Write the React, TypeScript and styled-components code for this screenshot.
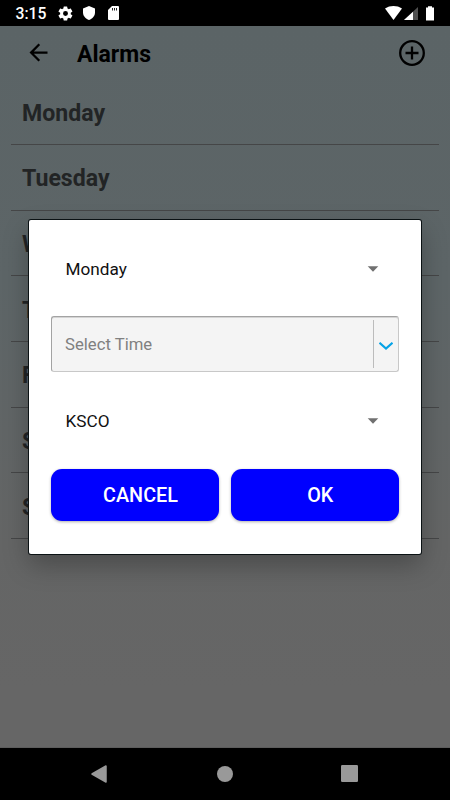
import React from "react";
import styled, { createGlobalStyle } from "styled-components";

const GlobalStyle = createGlobalStyle`
  * { box-sizing: border-box; }
  body { margin: 0; background: #000; font-family: Roboto, sans-serif; }
`;

const Screen = styled.div`
  position: relative;
  width: 450px;
  height: 800px;
  display: flex;
  flex-direction: column;
  overflow: hidden;
`;

const StatusBar = styled.header`
  height: 26px;
  flex: none;
  display: flex;
  align-items: center;
  justify-content: space-between;
  padding: 0 15px;
  background: #000;
  color: #fff;
`;

const StatusGroup = styled.div`
  display: flex;
  align-items: center;
  height: 26px;
  svg { display: block; flex: none; }
`;

const Clock = styled.span`
  width: 42px;
  font-size: 15.7px;
  line-height: 26px;
  font-weight: 500;
  padding: 2px 0 0 0.5px;
`;

const ShieldIcon = styled.svg`
  margin-left: 9px;
`;

const CardIcon = styled.svg`
  margin-left: 13px;
`;

const Page = styled.main`
  flex: 1;
  background: linear-gradient(#5b6466 0%, #5d6567 35%, #646565 72%, #666 92%);
  border-bottom: 1px solid #5c5c5c;
`;

const AppBar = styled.div`
  height: 53.3px;
  display: flex;
  align-items: center;
  padding: 0 24px 0 25px;
  svg { display: block; flex: none; }
`;

const Title = styled.h1`
  flex: 1;
  margin: 4px 0 0 25px;
  font-size: 23px;
  line-height: 28px;
  font-weight: 700;
  color: #000;
`;

const DayList = styled.ul`
  list-style: none;
  margin: 0;
  padding: 0 11px;
  display: flex;
  flex-direction: column;
`;

const DayRow = styled.li`
  height: 65.67px;
  padding: 3.4px 11px 0;
  display: flex;
  align-items: center;
  border-bottom: 1px solid #454647;
  font-size: 23.1px;
  font-weight: 700;
  color: #222425;
`;

const NavBar = styled.nav`
  height: 52px;
  flex: none;
  background: #000;
  display: flex;
  align-items: center;
  justify-content: space-between;
  padding: 0 92px 1px 90px;
  svg { display: block; }
`;

const Dialog = styled.section`
  position: absolute;
  left: 29px;
  top: 220px;
  width: 392px;
  height: 334px;
  padding: 22px 22px 0;
  background: #fff;
  border-radius: 2px;
  box-shadow: 0 0 0 1px #0b1214, 0 11px 26px rgba(0, 0, 0, 0.27);
  display: flex;
  flex-direction: column;
`;

const Spinner = styled.div`
  height: 54px;
  display: flex;
  align-items: center;
  justify-content: space-between;
  padding: 0 20px 0 14.5px;
  font-size: 17.2px;
  line-height: 22px;
  color: #111;
  svg { display: block; }
`;

const TimeField = styled.div`
  height: 56px;
  margin: 20px 0 22px;
  display: flex;
  align-items: center;
  padding: 3px 0 3px 13px;
  background: #f4f4f4;
  border: 1px solid;
  border-color: #a3a3a3 #c8c8c8 #c8c8c8 #a3a3a3;
  border-radius: 3px;
  box-shadow: inset 0 1px #d4d4d4;
  font-size: 16.7px;
  color: #808080;
`;

const Placeholder = styled.span`
  flex: 1;
  padding-top: 1px;
`;

const DropButton = styled.span`
  width: 25px;
  height: 48px;
  padding-top: 3px;
  display: flex;
  align-items: center;
  justify-content: center;
  border-left: 1px solid #bcbcbc;
`;

const Actions = styled.div`
  display: grid;
  grid-template-columns: 168px 168.5px;
  justify-content: space-between;
  margin-top: 21px;
`;

const ActionButton = styled.button`
  height: 52px;
  border: 0;
  border-radius: 11px;
  padding: 1px 0 0 11px;
  background: #0000ff;
  color: #fff;
  font: 500 19.8px Roboto, sans-serif;
  box-shadow: 0 1px 3px rgba(0, 0, 0, 0.32);
`;

const Caret = () => (
  <svg width="12" height="6" viewBox="0 0 12 6">
    <path d="M.7.3h10.6L6 5.7z" fill="#707070" />
  </svg>
);

const days = ["Monday", "Tuesday", "Wednesday", "Thursday", "Friday", "Saturday", "Sunday"];

export default function App() {
  return (
    <Screen>
      <GlobalStyle />
      <StatusBar>
        <StatusGroup>
          <Clock>3:15</Clock>
          <svg width="17" height="17" viewBox="0 0 24 24" fill="#fff">
            <path d="M19.4 13a7.8 7.8 0 0 0 0-2l2.1-1.6c.2-.2.2-.4.1-.6l-2-3.5c-.1-.2-.4-.3-.6-.2l-2.5 1a7.3 7.3 0 0 0-1.7-1l-.4-2.6a.5.5 0 0 0-.5-.5h-4a.5.5 0 0 0-.5.5L9 5.1a7.3 7.3 0 0 0-1.7 1l-2.5-1c-.2-.1-.5 0-.6.2l-2 3.5c-.1.2-.1.4.1.6L4.5 11a7.8 7.8 0 0 0 0 2l-2.2 1.6c-.2.2-.2.4-.1.6l2 3.5c.1.2.4.3.6.2l2.5-1a7.3 7.3 0 0 0 1.7 1l.4 2.6c0 .3.2.5.5.5h4c.3 0 .5-.2.5-.5l.4-2.6a7.3 7.3 0 0 0 1.7-1l2.5 1c.2.1.5 0 .6-.2l2-3.5c.1-.2.1-.4-.1-.6zM12 15.5a3.5 3.5 0 1 1 0-7 3.5 3.5 0 0 1 0 7z" />
          </svg>
          <ShieldIcon width="12" height="14" viewBox="0 0 12 14" fill="#fff">
            <path d="M6 0l6 2.4v4.2c0 3.4-2.5 6.2-6 7.4C2.5 12.8 0 10 0 6.6V2.4z" />
          </ShieldIcon>
          <CardIcon width="11" height="14" viewBox="0 0 11 14" fill="#fff">
            <path d="M4 0h6a1 1 0 0 1 1 1v12a1 1 0 0 1-1 1H1a1 1 0 0 1-1-1V4z" />
            <path d="M4.5 2v2.5M6.5 2v2.5M8.5 2v2.5" stroke="#222" strokeWidth="1" />
          </CardIcon>
        </StatusGroup>
        <StatusGroup>
          <svg width="50" height="15" viewBox="0 0 50 15">
            <path d="M0 2.5C5-.8 12-.8 17 2.5L8.5 14z" fill="#fff" />
            <path d="M33 1v13H19z" fill="#505050" />
            <path d="M28 5.7V14h-9z" fill="#fff" />
            <path d="M43 .2h4v1.4h2v13h-8v-13h2z" fill="#fff" />
          </svg>
        </StatusGroup>
      </StatusBar>
      <Page>
        <AppBar>
          <svg width="27" height="27" viewBox="0 0 24 24">
            <path d="M20 11H7.83l5.59-5.59L12 4l-8 8 8 8 1.41-1.41L7.83 13H20z" fill="#000" />
          </svg>
          <Title>Alarms</Title>
          <svg width="28" height="28" viewBox="0 0 28 28" fill="none" stroke="#000" strokeWidth="2.3">
            <circle cx="14" cy="14" r="11.8" />
            <path d="M14 7.5v13M7.5 14h13" />
          </svg>
        </AppBar>
        <DayList>
          {days.map((d) => (
            <DayRow key={d}>{d}</DayRow>
          ))}
        </DayList>
      </Page>
      <NavBar>
        <svg width="18" height="20" viewBox="0 0 18 20">
          <path d="M16 2v16L2 10z" fill="#999" stroke="#999" strokeWidth="1.5" strokeLinejoin="round" />
        </svg>
        <svg width="16" height="16" viewBox="0 0 16 16">
          <circle cx="8" cy="8" r="8" fill="#999" />
        </svg>
        <svg width="17" height="17" viewBox="0 0 17 17">
          <rect width="17" height="17" rx="1.2" fill="#999" />
        </svg>
      </NavBar>
      <Dialog>
        <Spinner>
          Monday
          <Caret />
        </Spinner>
        <TimeField>
          <Placeholder>Select Time</Placeholder>
          <DropButton>
            <svg width="14" height="8" viewBox="0 0 14 8">
              <path d="M.5.8L7 6.5 13.5.8" fill="none" stroke="#06a3e6" strokeWidth="2.2" />
            </svg>
          </DropButton>
        </TimeField>
        <Spinner>
          KSCO
          <Caret />
        </Spinner>
        <Actions>
          <ActionButton>CANCEL</ActionButton>
          <ActionButton>OK</ActionButton>
        </Actions>
      </Dialog>
    </Screen>
  );
}
